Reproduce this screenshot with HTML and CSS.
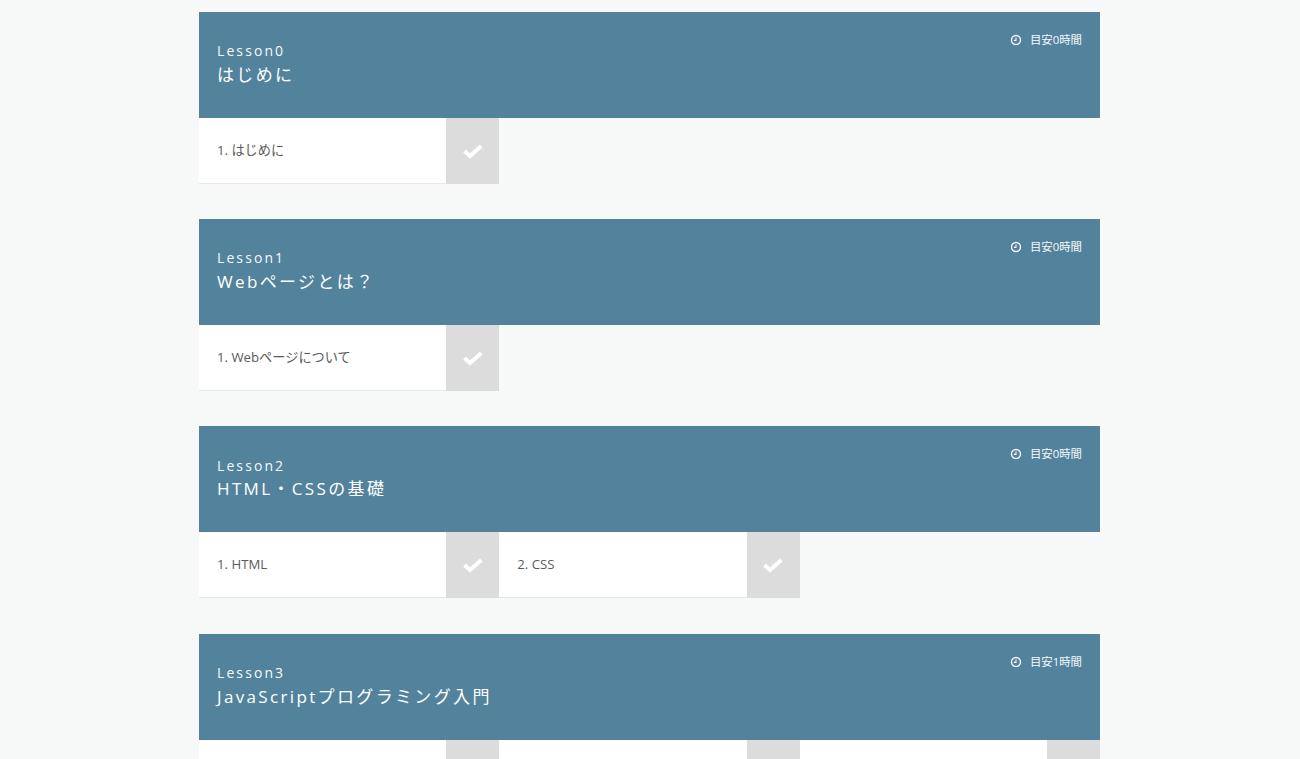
FILE: index.html
```html
<!DOCTYPE html>
<html lang="ja">
<head>
<meta charset="utf-8">
<title>Lessons</title>
<link rel="stylesheet" href="styles.css">
</head>
<body>
<svg class="defs" width="0" height="0" aria-hidden="true">
  <symbol id="check" viewBox="0 0 20 16"><path d="M1.5 8 7 13 18.4 3" fill="none" stroke="currentColor" stroke-width="4"/></symbol>
  <symbol id="clock" viewBox="0 0 12 12"><circle cx="6" cy="6" r="4.5" fill="none" stroke="currentColor" stroke-width="1.4"/><path d="M6 3.4V6.4H3.9" fill="none" stroke="currentColor" stroke-width="1.1"/></symbol>
</svg>
<main class="page">
  <section class="lesson">
    <header class="lesson-head">
      <div class="lesson-titles"><p class="lesson-no">Lesson0</p><h2 class="lesson-name">はじめに</h2></div>
      <p class="lesson-time"><svg class="clock"><use href="#clock"/></svg>目安0時間</p>
    </header>
    <ul class="items">
      <li class="item"><span class="item-name">1. はじめに</span><span class="item-check"><svg class="check"><use href="#check"/></svg></span></li>
    </ul>
  </section>
  <section class="lesson">
    <header class="lesson-head">
      <div class="lesson-titles"><p class="lesson-no">Lesson1</p><h2 class="lesson-name">Webページとは？</h2></div>
      <p class="lesson-time"><svg class="clock"><use href="#clock"/></svg>目安0時間</p>
    </header>
    <ul class="items">
      <li class="item"><span class="item-name">1. Webページについて</span><span class="item-check"><svg class="check"><use href="#check"/></svg></span></li>
    </ul>
  </section>
  <section class="lesson">
    <header class="lesson-head">
      <div class="lesson-titles"><p class="lesson-no">Lesson2</p><h2 class="lesson-name">HTML・CSSの基礎</h2></div>
      <p class="lesson-time"><svg class="clock"><use href="#clock"/></svg>目安0時間</p>
    </header>
    <ul class="items">
      <li class="item"><span class="item-name">1. HTML</span><span class="item-check"><svg class="check"><use href="#check"/></svg></span></li>
      <li class="item"><span class="item-name">2. CSS</span><span class="item-check"><svg class="check"><use href="#check"/></svg></span></li>
    </ul>
  </section>
  <section class="lesson">
    <header class="lesson-head">
      <div class="lesson-titles"><p class="lesson-no">Lesson3</p><h2 class="lesson-name">JavaScriptプログラミング入門</h2></div>
      <p class="lesson-time"><svg class="clock"><use href="#clock"/></svg>目安1時間</p>
    </header>
    <ul class="items">
      <li class="item"><span class="item-name"></span><span class="item-check"></span></li>
      <li class="item"><span class="item-name"></span><span class="item-check"></span></li>
      <li class="item"><span class="item-name"></span><span class="item-check"></span></li>
    </ul>
  </section>
</main>
</body>
</html>
```

FILE: styles.css
```css
* { box-sizing: border-box; }
html, body { margin: 0; height: 759px; overflow: hidden; }
body {
  background: #f7f9f9;
  font-family: "Open Sans", "Noto Sans CJK JP", sans-serif;
  color: #555;
}
.defs { display: block; height: 0; }
.page { width: 901px; margin-left: 199px; padding-top: 11.67px; display: flex; flex-direction: column; gap: 35.33px; }
.lesson-head {
  height: 106px;
  background: #53839c;
  color: #fff;
  padding: 0 18px;
  display: flex;
  justify-content: space-between;
  align-items: flex-start;
}
.lesson-titles { padding-top: 30.4px; }
.lesson-no { margin: 0; font-size: 14px; line-height: 18px; letter-spacing: 2.1px; opacity: .95; }
.lesson-name { margin: 1.6px 0 0; font-size: 17px; line-height: 26px; font-weight: 400; letter-spacing: 2.35px; }
.lesson-time { margin: 19px 0 0; font-size: 11.4px; line-height: 18px; display: flex; align-items: center; opacity: .95; }
.clock { width: 12px; height: 12px; margin-right: 8px; }
.items { list-style: none; margin: 0; padding: 0; display: flex; }
.item { width: 300.33px; height: 66px; display: flex; background: #fff; border-bottom: 1px solid #e8e8e8; }
.item-name { flex: 1; padding-left: 18px; font-size: 13.2px; line-height: 64.6px; color: #5a5a5a; }
.item-check { width: 53px; height: 66px; background: #dcdcdc; color: #fff; display: flex; align-items: center; justify-content: center; }
.check { width: 20px; height: 16px; }
```
